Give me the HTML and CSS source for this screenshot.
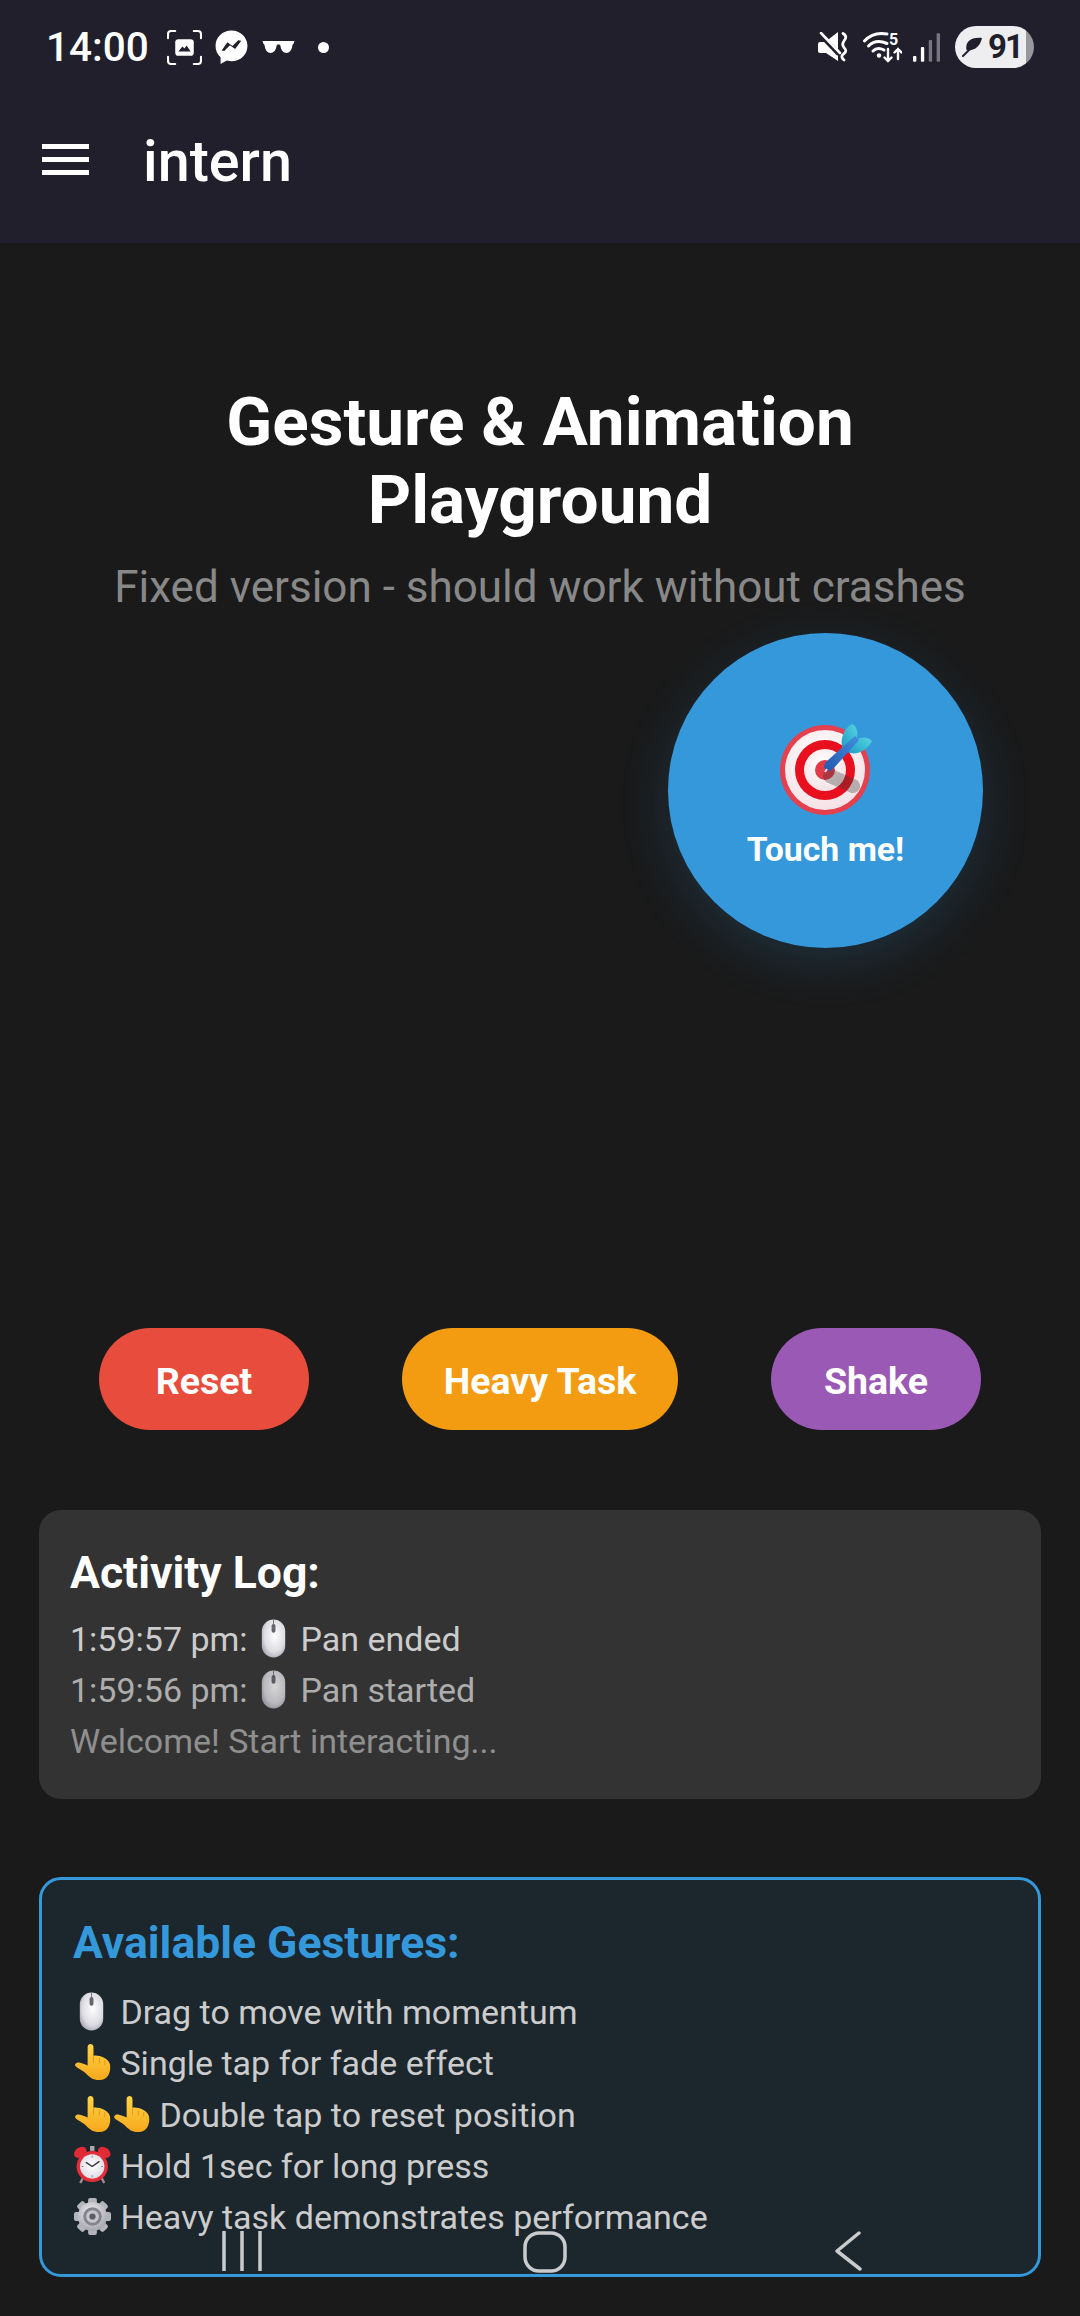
FILE: index.html
```html
<!DOCTYPE html>
<html lang="en">
<head>
<meta charset="UTF-8">
<meta name="viewport" content="width=device-width, initial-scale=1.0">
<title>intern</title>
<link rel="stylesheet" href="styles.css">
</head>
<body>

<!-- emoji drawn once, used below -->
<svg class="defs" aria-hidden="true">
  <defs>
    <radialGradient id="mouseBody" cx=".55" cy=".42" r=".68">
      <stop offset="0" stop-color="#ffffff"/>
      <stop offset=".65" stop-color="#dcdce2"/>
      <stop offset="1" stop-color="#9c9aa8"/>
    </radialGradient>
    <linearGradient id="fingerFill" x1="0" y1="0" x2="0" y2="1">
      <stop offset="0" stop-color="#ffd545"/>
      <stop offset="1" stop-color="#f6a81c"/>
    </linearGradient>
    <radialGradient id="gearFill" cx=".45" cy=".35" r=".75">
      <stop offset="0" stop-color="#eeeef1"/>
      <stop offset="1" stop-color="#9c9ca4"/>
    </radialGradient>
    <radialGradient id="faceFill" cx=".5" cy=".45" r=".6">
      <stop offset="0" stop-color="#ffffff"/>
      <stop offset="1" stop-color="#dcdae4"/>
    </radialGradient>
    <linearGradient id="dartBody" x1="0" y1="1" x2="1" y2="0">
      <stop offset="0" stop-color="#2458ae"/>
      <stop offset="1" stop-color="#3f8ede"/>
    </linearGradient>
    <linearGradient id="dartFlight" x1="0" y1="1" x2="1" y2="0">
      <stop offset="0" stop-color="#1f9cc4"/>
      <stop offset="1" stop-color="#55d4e2"/>
    </linearGradient>
    <radialGradient id="ringWhite" cx=".45" cy=".35" r=".75">
      <stop offset="0" stop-color="#ffffff"/>
      <stop offset="1" stop-color="#f3dde2"/>
    </radialGradient>
  </defs>
  <symbol id="e-mouse" viewBox="0 0 40 40">
    <rect x="7" y="0.500" width="24" height="39" rx="12" fill="url(#mouseBody)"/>
    <path d="M19 0.500v5" stroke="#77757f" stroke-width="1"/>
    <rect x="17" y="5" width="4" height="9" rx="2" fill="#66646e"/>
  </symbol>
  <symbol id="e-finger" viewBox="0 0 40 40">
    <path d="M15 4C15 0 21 0 21 4V13C26 12 36 15 38 22 39 30 36 38 27 38 20 38 17 35 13 31 10 28 5 26 3 24 1 22 3 20 6 20 9 20.500 12 22 15 23z" fill="url(#fingerFill)"/>
    <path d="M21 14v6M27 15.500v5M32.500 18v4" stroke="#e3961a" stroke-width="1" stroke-linecap="round"/>
  </symbol>
  <symbol id="e-clock" viewBox="0 0 40 40">
    <rect x="17.500" y="0" width="4.500" height="5" fill="#a8a8ae"/>
    <ellipse cx="7.500" cy="6.500" rx="7" ry="5" fill="#e22a34" transform="rotate(-35 7.500 6.500)"/>
    <ellipse cx="32" cy="6.500" rx="7" ry="5" fill="#e22a34" transform="rotate(35 32 6.500)"/>
    <path d="M10 33l-2.500 5M29.500 33l2.500 5" stroke="#9b8f92" stroke-width="2.500"/>
    <circle cx="19.700" cy="21" r="16" fill="#e42d38"/>
    <circle cx="19.700" cy="21" r="12.500" fill="url(#faceFill)"/>
    <path d="M19.700 21l7-5M19.700 21l-6-4" stroke="#33323a" stroke-width="1.400" stroke-linecap="round"/>
    <path d="M19.700 10v2M19.700 30v2M8.700 21h2M28.700 21h2" stroke="#8a8890" stroke-width="1"/>
  </symbol>
  <symbol id="e-gear" viewBox="0 0 40 40">
    <g fill="#b4b4bb">
      <rect x="15.500" y="1" width="9" height="38" rx="2"/>
      <rect x="15.500" y="1" width="9" height="38" rx="2" transform="rotate(45 20 20)"/>
      <rect x="15.500" y="1" width="9" height="38" rx="2" transform="rotate(90 20 20)"/>
      <rect x="15.500" y="1" width="9" height="38" rx="2" transform="rotate(135 20 20)"/>
    </g>
    <circle cx="20" cy="20" r="15" fill="url(#gearFill)"/>
    <circle cx="20" cy="20" r="9.500" fill="#84848c"/>
    <circle cx="20" cy="20" r="6.500" fill="#c6c6cc"/>
    <circle cx="20" cy="20" r="3.200" fill="#5c5c64"/>
  </symbol>
</svg>

<header class="topbar">
  <div class="statusbar">
    <div class="status-left">
      <span class="clock">14:00</span>
      <svg class="ic-shot" viewBox="0 0 34 34" fill="none" stroke="#fff" stroke-width="2" stroke-linecap="round">
        <path d="M1 8V4a3 3 0 0 1 3-3h4M26 1h4a3 3 0 0 1 3 3v4M33 26v4a3 3 0 0 1-3 3h-4M8 33H4a3 3 0 0 1-3-3v-4"/>
        <rect x="8" y="9" width="18" height="16" rx="3" fill="#fff" stroke="none"/>
        <path d="M11 21l4-5 2 2 2-3 4 6z" fill="#201f2b" stroke="none"/>
      </svg>
      <svg class="ic-msg" viewBox="0 0 32 34">
        <path d="M16 0.500C7.200 0.500 0.500 7 0.500 15.500c0 4.500 1.800 8.300 4.900 11v6.500l6-3.300c1.500.4 3 .6 4.600.6 8.800 0 15.500-6.500 15.500-14.800S24.800.5 16 .5z" fill="#fff"/>
        <path d="M6.500 20l5.500-8 5 3.600 5.500-5.600 3 .5-6 8-5-3.600-5.500 5.600z" fill="#201f2b"/>
      </svg>
      <svg class="ic-glasses" viewBox="0 0 32 12">
        <path d="M0 0h32l-1 3c-.5 0-1 .4-1.200 2-.5 4-2.800 7-5.800 7-3.200 0-5.600-3-6-7-.2-1-.6-1.500-2-1.500s-1.800.5-2 1.500c-.4 4-2.800 7-6 7-3 0-5.300-3-5.800-7C2 3.400 1.500 3 1 3z" fill="#fff"/>
      </svg>
      <span class="dot"></span>
    </div>
    <div class="status-right">
      <svg class="ic-mute" viewBox="0 0 30 30">
        <path d="M0 12a2 2 0 0 1 2-2h5L20 0v29L8 21H2a2 2 0 0 1-2-2z" fill="#fff"/>
        <path d="M2 2l19 20" stroke="#201f2b" stroke-width="5"/>
        <path d="M3 1l19 20" stroke="#fff" stroke-width="2.600" stroke-linecap="round"/>
        <path d="M25 1.500c4 2.500 3 5 1 7.500s-2 4 0 6.500 3 4-.5 6.500c-2.500 2-2 4 .5 6" fill="none" stroke="#fff" stroke-width="2.800" stroke-linecap="round"/>
      </svg>
      <svg class="ic-wifi" viewBox="0 0 39 32" fill="none" stroke="#fff" stroke-linecap="round">
        <path d="M1.500 10C8 3 16 1.500 24 3" stroke-width="3"/>
        <path d="M5.500 15C10 10.500 17 9.500 24 12.500" stroke-width="3"/>
        <path d="M10 20c3-3 7-3 11-1" stroke-width="3"/>
        <circle cx="16" cy="24.500" r="2.200" fill="#fff" stroke="none"/>
        <path d="M25 18v12M21.500 26.500l3.500 3.500 3.500-3.500M35 28V18M31.500 21.500l3.500-3.500 3.500 3.500" stroke-width="2.400"/>
      </svg>
      <span class="wifi-five">5</span>
      <svg class="ic-bars" viewBox="0 0 27.400 29">
        <rect x="0" y="23" width="3.400" height="6" rx="1" fill="#fff"/>
        <rect x="8" y="14" width="3.400" height="15" rx="1" fill="#fff"/>
        <rect x="16" y="7" width="3.400" height="22" rx="1" fill="#77767f"/>
        <rect x="24" y="0" width="3.400" height="29" rx="1" fill="#77767f"/>
      </svg>
      <div class="battery">
        <svg class="ic-leaf" viewBox="0 0 22 21">
          <path d="M21 1C12 0 5 3 4.500 10c-.2 1.500 0 3 .5 4 8 .5 14-4 16-13z" fill="#201f2b"/>
          <path d="M1 20l9-9" stroke="#201f2b" stroke-width="2" stroke-linecap="round"/>
        </svg>
        <span class="battery-num">91</span>
      </div>
    </div>
  </div>
  <div class="appbar">
    <div class="burger"><span></span><span></span><span></span></div>
    <div class="app-title">intern</div>
  </div>
</header>

<main class="content">
  <h1 class="title">Gesture &amp; Animation Playground</h1>
  <p class="subtitle">Fixed version - should work without crashes</p>

  <div class="playground">
    <div class="ball">
      <svg class="target" viewBox="0 0 92 91">
        <circle cx="45" cy="46" r="45" fill="#e4404e"/>
        <circle cx="45" cy="46" r="40" fill="url(#ringWhite)"/>
        <circle cx="45" cy="46" r="30" fill="#e8101e"/>
        <circle cx="45" cy="46" r="21" fill="url(#ringWhite)"/>
        <circle cx="45" cy="46" r="10" fill="#e23a48"/>
        <path d="M50 52l23 10" stroke="#333" stroke-width="14" stroke-linecap="round" opacity=".32"/>
        <path d="M63 25C59 16 64 4 72 0c6 3 7 11 3 19z" fill="url(#dartFlight)"/>
        <path d="M67 28c9 4 20-1 25-11-5-5-11-4-18-1z" fill="url(#dartFlight)"/>
        <path d="M47 37L75 12l4 4-26 29c-2 2-6 2-8 0-1.500-2-1-5 2-8z" fill="url(#dartBody)"/>
        <path d="M47 45l-2 3" stroke="#f4d9dc" stroke-width="2"/>
      </svg>
      <span class="ball-label">Touch me!</span>
    </div>
  </div>

  <div class="actions">
    <button class="btn btn-reset">Reset</button>
    <button class="btn btn-heavy">Heavy Task</button>
    <button class="btn btn-shake">Shake</button>
  </div>

  <section class="log">
    <h3 class="log-title">Activity Log:</h3>
    <div class="log-row">1:59:57 pm: <svg class="emoji"><use href="#e-mouse"/></svg> Pan ended</div>
    <div class="log-row log-old">1:59:56 pm: <svg class="emoji"><use href="#e-mouse"/></svg> Pan started</div>
    <div class="log-row log-oldest">Welcome! Start interacting...</div>
  </section>

  <section class="help">
    <h3 class="help-title">Available Gestures:</h3>
    <div class="help-row"><svg class="emoji"><use href="#e-mouse"/></svg> Drag to move with momentum</div>
    <div class="help-row"><svg class="emoji"><use href="#e-finger"/></svg> Single tap for fade effect</div>
    <div class="help-row"><svg class="emoji"><use href="#e-finger"/></svg><svg class="emoji"><use href="#e-finger"/></svg> Double tap to reset position</div>
    <div class="help-row"><svg class="emoji"><use href="#e-clock"/></svg> Hold 1sec for long press</div>
    <div class="help-row"><svg class="emoji"><use href="#e-gear"/></svg> Heavy task demonstrates performance</div>
  </section>
</main>

<!-- system nav sits over the page -->
<nav class="navbar">
  <svg class="nav-recent" viewBox="0 0 42 40" stroke="#c9cbcd" stroke-width="3.500">
    <path d="M3 0v40M21 0v40M39 0v40"/>
  </svg>
  <svg class="nav-home" viewBox="0 0 44 42" fill="none" stroke="#c9cbcd" stroke-width="3.500">
    <rect x="2" y="2" width="40" height="38" rx="14"/>
  </svg>
  <svg class="nav-back" viewBox="0 0 28 40" fill="none" stroke="#c9cbcd" stroke-width="3.500" stroke-linecap="round" stroke-linejoin="round">
    <path d="M25 2L3 20l23 18"/>
  </svg>
</nav>

</body>
</html>
```

FILE: styles.css
```css
html, body {
  margin: 0;
  padding: 0;
}

body {
  position: relative;
  width: 1080px;
  height: 2316px;
  overflow: hidden;
  background-color: #1a1a1a;
  font-family: Roboto, "Liberation Sans", sans-serif;
  color: #fff;
}

.defs {
  position: absolute;
  width: 0;
  height: 0;
}

.topbar {
  height: 243px;
  background-color: #201f2b;
}

.statusbar {
  height: 94px;
  display: flex;
  justify-content: space-between;
  align-items: center;
  padding: 0 46px 0 46px;
}

.status-left,
.status-right {
  display: flex;
  align-items: center;
}

.clock {
  font-size: 40.5px;
  font-weight: 500;
}

.ic-shot {
  width: 35px;
  height: 35px;
  margin-left: 18px;
}

.ic-msg {
  width: 35px;
  height: 35px;
  margin-left: 12px;
}

.ic-glasses {
  width: 33px;
  height: 12px;
  margin-left: 13px;
}

.dot {
  width: 11px;
  height: 11px;
  margin-left: 23px;
  border-radius: 50%;
  background-color: #fff;
}

.status-right {
  position: relative;
}

.ic-mute {
  width: 30px;
  height: 30px;
}

.ic-wifi {
  width: 39px;
  height: 32px;
  margin-left: 15px;
}

.wifi-five {
  position: absolute;
  left: 71px;
  top: 5px;
  font-size: 16px;
  font-weight: 700;
  line-height: 18px;
}

.ic-bars {
  width: 27px;
  height: 29px;
  margin-left: 11px;
}

.battery {
  display: flex;
  align-items: center;
  width: 79px;
  height: 42px;
  margin-left: 15px;
  padding-left: 7px;
  box-sizing: border-box;
  border-radius: 21px;
  background: linear-gradient(90deg, #eeeef0 90%, #98979d 90%);
}

.ic-leaf {
  width: 21px;
  height: 20px;
}

.battery-num {
  margin-left: 5px;
  font-size: 33px;
  font-weight: 700;
  line-height: 42px;
  letter-spacing: -2px;
  color: #201f2b;
}

.appbar {
  height: 149px;
  display: flex;
  align-items: center;
  padding-left: 42px;
  padding-bottom: 18px;
  box-sizing: border-box;
}

.burger {
  display: flex;
  flex-direction: column;
  gap: 8px;
  width: 47px;
}

.burger span {
  height: 5px;
  background-color: #fff;
}

.app-title {
  margin-left: 54px;
  margin-top: 4px;
  font-size: 57.5px;
  font-weight: 500;
}

.content {
  padding: 140px 39px 0;
}

.title {
  margin: 0 auto;
  width: 700px;
  font-size: 67.5px;
  line-height: 78px;
  font-weight: 700;
  text-align: center;
}

.subtitle {
  margin: 18px 0 0;
  font-size: 44px;
  line-height: 60px;
  text-align: center;
  color: #888;
}

.playground {
  position: relative;
  height: 711px;
}

.ball {
  position: absolute;
  left: 629px;
  top: 16px;
  width: 315px;
  height: 315px;
  border-radius: 50%;
  background-color: #3498db;
  box-shadow: 0 14px 50px rgba(52, 152, 219, 0.18);
  display: flex;
  flex-direction: column;
  align-items: center;
}

.target {
  width: 92px;
  height: 91px;
  margin-top: 91px;
}

.ball-label {
  margin-top: 15px;
  font-size: 33.75px;
  font-weight: 700;
}

.actions {
  display: flex;
  justify-content: space-between;
  padding: 0 60px;
}

.btn {
  min-width: 210px;
  height: 102px;
  padding: 4px 42px 0;
  border: none;
  border-radius: 51px;
  font-family: inherit;
  font-size: 37.5px;
  font-weight: 700;
  color: #fff;
}

.btn-reset {
  background-color: #e74c3c;
}

.btn-heavy {
  background-color: #f39c12;
}

.btn-shake {
  background-color: #9b59b6;
}

.log {
  height: 289px;
  margin-top: 80px;
  padding: 33px 31px 0;
  box-sizing: border-box;
  border-radius: 22px;
  background-color: #333;
}

.log-title {
  margin: 0 0 11px;
  font-size: 44.5px;
  line-height: 60px;
  font-weight: 700;
}

.log-row {
  font-size: 34px;
  line-height: 51px;
  color: #ccc;
}

.log-row .emoji {
  margin: 0 -1.5px;
}

.log-old {
  opacity: 0.8;
}

.log-oldest {
  opacity: 0.6;
}

.emoji {
  width: 39px;
  height: 39px;
  vertical-align: -7px;
}

.help {
  height: 400px;
  margin-top: 78px;
  padding: 33px 31px 0;
  box-sizing: border-box;
  border: 3px solid #3498db;
  border-radius: 22px;
  background-color: rgba(52, 152, 219, 0.1);
}

.help-title {
  margin: 0 0 14px;
  font-size: 44.5px;
  line-height: 60px;
  font-weight: 700;
  color: #3498db;
}

.help-row {
  font-size: 34px;
  line-height: 51.3px;
  color: #ccc;
}

.navbar {
  position: absolute;
  left: 0;
  right: 0;
  top: 2231px;
  height: 42px;
}

.nav-recent,
.nav-home,
.nav-back {
  position: absolute;
  top: 0;
}

.nav-recent {
  left: 221px;
  width: 42px;
  height: 40px;
}

.nav-home {
  left: 523px;
  width: 44px;
  height: 42px;
}

.nav-back {
  left: 834px;
  width: 28px;
  height: 40px;
}
```
